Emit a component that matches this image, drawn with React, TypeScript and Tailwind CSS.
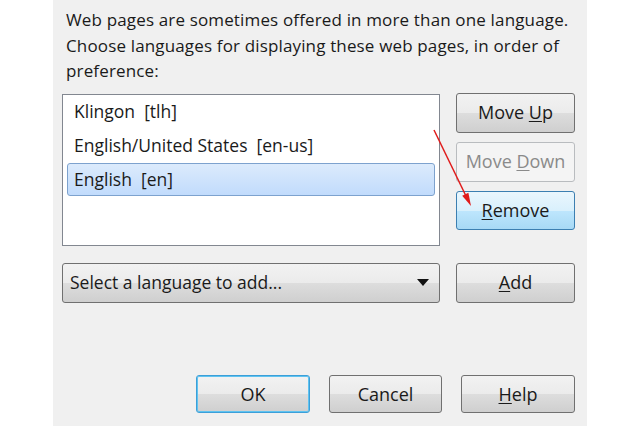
import React from "react";

const font = { fontFamily: '"Open Sans", "Noto Sans", sans-serif' };

function Btn({
  children,
  kind = "normal",
  className = "",
}: {
  children: React.ReactNode;
  kind?: "normal" | "disabled" | "hover" | "default";
  className?: string;
}) {
  let look =
    "border-[#707070] bg-[linear-gradient(#f2f2f2_0%,#ebebeb_50%,#dddddd_51%,#cfcfcf_100%)] text-[#1a1a1a]";
  if (kind === "disabled")
    look = "border-[#b9bcbf] bg-[#f4f4f4] text-[#8a8a8a]";
  if (kind === "hover")
    look =
      "border-[#3c7fb1] bg-[linear-gradient(#eaf6fd_0%,#d9f0fc_50%,#bee6fd_51%,#a7d9f5_100%)] text-[#1a1a1a]";
  if (kind === "default")
    look =
      "border-[#3c9fd8] ring-1 ring-[#5fc3f0] ring-inset bg-[linear-gradient(#f2f2f2_0%,#ebebeb_50%,#dddddd_51%,#cfcfcf_100%)] text-[#1a1a1a]";
  return (
    <div
      className={`flex items-center justify-center rounded-[3px] border text-[18px] ${look} ${className}`}
    >
      {children}
    </div>
  );
}

export default function App() {
  return (
    <div className="flex justify-center bg-white" style={font}>
      <div className="relative flex h-[426px] w-[534px] flex-col bg-[#f0f0f0] pl-[9px] pr-[12px] pt-[7px] pb-[13px] text-[#1a1a1a]">
        <p className="ml-[4px] text-[17px] leading-[25.5px] tracking-[0.15px]">
          Web pages are sometimes offered in more than one language. Choose
          languages for displaying these web pages, in order of preference:
        </p>

        <div className="mt-[10px] flex gap-[16px]">
          <div className="h-[152px] w-[378px] border border-[#828790] bg-white px-[4px] text-[17.5px]">
            <div className="flex h-[34px] items-center pl-[7px]">Klingon&nbsp;&nbsp;[tlh]</div>
            <div className="flex h-[34px] items-center pl-[7px]">
              English/United States&nbsp;&nbsp;[en-us]
            </div>
            <div className="flex h-[33px] items-center rounded-[3px] border border-[#7da2ce] bg-[linear-gradient(#dcebfc,#c1dbfc)] pl-[6px]">
              English&nbsp;&nbsp;[en]
            </div>
          </div>
          <div className="-mt-[1px] flex w-[119px] flex-col gap-[9px]">
            <Btn className="h-[40px]">
              Move&nbsp;<span className="underline underline-offset-2">U</span>p
            </Btn>
            <Btn kind="disabled" className="h-[40px]">
              Move&nbsp;<span className="underline underline-offset-2">D</span>own
            </Btn>
            <Btn kind="hover" className="h-[39px]">
              <span className="underline underline-offset-2">R</span>emove
            </Btn>
          </div>
        </div>

        <div className="mt-[17px] flex gap-[16px]">
          <div className="flex h-[40px] w-[378px] items-center justify-between rounded-[3px] border border-[#707070] bg-[linear-gradient(#f2f2f2_0%,#ebebeb_50%,#dddddd_51%,#cfcfcf_100%)] pl-[7px] pr-[10px] text-[17.5px]">
            <span>Select a language to add...</span>
            <svg width="12" height="7" viewBox="0 0 12 7">
              <path d="M0 0 L12 0 L6 7 Z" fill="#111" />
            </svg>
          </div>
          <Btn className="h-[40px] w-[119px]">
            <span className="underline underline-offset-2">A</span>dd
          </Btn>
        </div>

        <div className="mt-auto flex justify-end gap-[19px]">
          <Btn kind="default" className="h-[38px] w-[114px]">OK</Btn>
          <Btn className="h-[38px] w-[113px]">Cancel</Btn>
          <Btn className="h-[38px] w-[114px]">
            <span className="underline underline-offset-2">H</span>elp
          </Btn>
        </div>

        <svg
          className="pointer-events-none absolute left-[370px] top-[120px]"
          width="60"
          height="100"
          viewBox="0 0 60 100"
        >
          <line x1="11" y1="10" x2="43" y2="76" stroke="#e01b1b" strokeWidth="1.5" />
          <path d="M48 86 L45.4 72.8 L39.2 75.8 Z" fill="#e01b1b" />
        </svg>
      </div>
    </div>
  );
}
